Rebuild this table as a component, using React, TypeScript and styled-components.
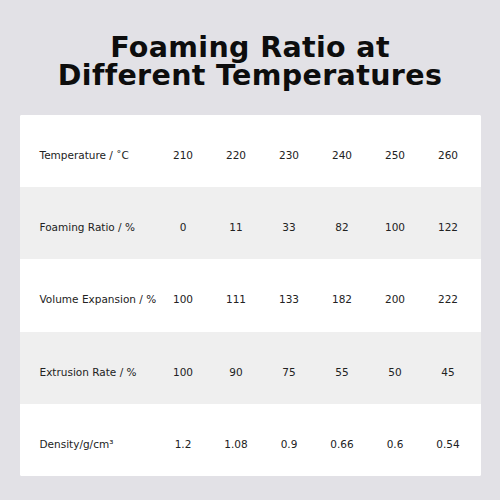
import React from 'react';
import styled, { createGlobalStyle } from 'styled-components';

const GlobalStyle = createGlobalStyle`
  html, body {
    margin: 0;
    padding: 0;
    background: #e2e1e6;
  }
`;

const Page = styled.div`
  width: 500px;
  height: 500px;
  box-sizing: border-box;
  padding-top: 34px;
  display: flex;
  flex-direction: column;
  align-items: center;
`;

const Title = styled.h1`
  margin: 0 0 25px;
  font-family: 'DejaVu Sans', sans-serif;
  font-weight: 700;
  font-size: 28.5px;
  line-height: 28px;
  letter-spacing: 0.35px;
  color: #0d0d0d;
  text-align: center;
`;

const Card = styled.div`
  width: 461px;
  background: #ffffff;
  border-radius: 2px;
  overflow: hidden;
`;

const Row = styled.div<{ $shaded?: boolean }>`
  display: grid;
  grid-template-columns: 1fr repeat(6, 53px);
  padding-right: 6px;
  height: 72.2px;
  align-items: center;
  background: ${(p) => (p.$shaded ? '#efefef' : '#ffffff')};
  font-family: 'DejaVu Sans', sans-serif;
  font-size: 10.5px;
  color: #222;
`;

const Label = styled.div`
  padding-left: 20px;
  padding-top: 8px;
  white-space: nowrap;
`;

const Cell = styled.div`
  text-align: center;
  padding-top: 8px;
`;

const rows: { label: string; values: string[] }[] = [
  { label: 'Temperature / ˚C', values: ['210', '220', '230', '240', '250', '260'] },
  { label: 'Foaming Ratio / %', values: ['0', '11', '33', '82', '100', '122'] },
  { label: 'Volume Expansion / %', values: ['100', '111', '133', '182', '200', '222'] },
  { label: 'Extrusion Rate / %', values: ['100', '90', '75', '55', '50', '45'] },
  { label: 'Density/g/cm³', values: ['1.2', '1.08', '0.9', '0.66', '0.6', '0.54'] },
];

export default function App() {
  return (
    <>
      <GlobalStyle />
      <Page>
        <Title>
          Foaming Ratio at
          <br />
          Different Temperatures
        </Title>
        <Card>
          {rows.map((r, i) => (
            <Row key={i} $shaded={i % 2 === 1}>
              <Label>{r.label}</Label>
              {r.values.map((v, j) => (
                <Cell key={j}>{v}</Cell>
              ))}
            </Row>
          ))}
        </Card>
      </Page>
    </>
  );
}
